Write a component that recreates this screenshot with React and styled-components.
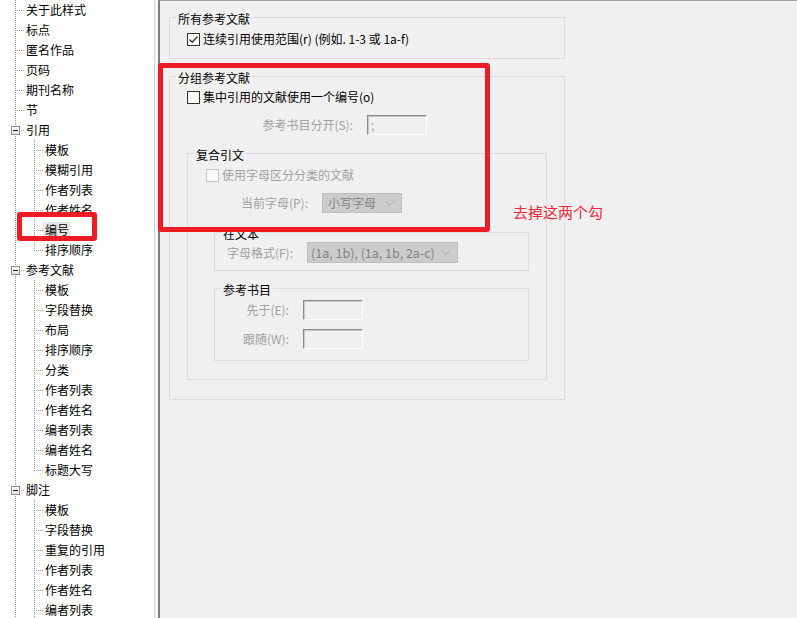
import React from "react";
import styled, { createGlobalStyle } from "styled-components";

const GlobalStyle = createGlobalStyle`
  html, body {
    margin: 0;
    padding: 0;
    background: #f0f0f0;
  }
  body {
    font-family: "Noto Sans CJK SC", "Noto Sans", sans-serif;
    font-size: 12px;
    color: #000;
  }
`;

const RED = "#ed1c24";
const DISABLED = "#a0a0a0";

const Window = styled.div`
  position: relative;
  display: flex;
  width: 797px;
  height: 618px;
  overflow: hidden;
  background: #f0f0f0;
`;

// ---- tree ----

const TreePane = styled.ul`
  flex: none;
  width: 155px;
  box-sizing: border-box;
  margin: 0;
  padding: 0 0 0 5px;
  list-style: none;
  background: #fff;
  border-right: 1px solid #d0d0d0;
  overflow: hidden;
`;

const Splitter = styled.div`
  flex: none;
  width: 3px;
  background: #f7f7f7;
`;

const TreeRow = styled.li`
  display: flex;
  align-items: center;
  height: 20px;
  white-space: nowrap;
`;

const dotV = "repeating-linear-gradient(to bottom, #a0a0a0 0 1px, transparent 1px 2px)";
const dotH = "repeating-linear-gradient(to right, #a0a0a0 0 1px, transparent 1px 2px)";

const guideBg = ({ $line, $branch }) => {
  const img = [];
  const size = [];
  const pos = [];
  if ($line !== "none") {
    img.push(dotV);
    size.push($line === "half" ? "1px 10px" : "1px 100%");
    pos.push("10px 0");
  }
  if ($branch) {
    img.push(dotH);
    size.push("9px 1px");
    pos.push("10px 10px");
  }
  if (!img.length) return "background: none;";
  return `
    background-image: ${img.join(", ")};
    background-size: ${size.join(", ")};
    background-position: ${pos.join(", ")};
    background-repeat: no-repeat;
  `;
};

const Guide = styled.span`
  flex: none;
  display: flex;
  align-items: center;
  width: 19px;
  height: 20px;
  ${guideBg}
`;

const Expander = styled.span`
  display: flex;
  align-items: center;
  justify-content: center;
  width: 9px;
  height: 9px;
  box-sizing: border-box;
  margin-left: 6px;
  border: 1px solid #8e8f8f;
  background: linear-gradient(#ffffff, #e2e2e2);
  &::before {
    content: "";
    width: 5px;
    height: 1px;
    background: #1e1e1e;
  }
`;

const NodeLabel = styled.span`
  padding: 0 2px;
  height: 16px;
  line-height: 16px;
  background: ${p => (p.$selected ? "#e8e8e8" : "transparent")};
`;

const tree = [
  { label: "关于此样式" },
  { label: "标点" },
  { label: "匿名作品" },
  { label: "页码" },
  { label: "期刊名称" },
  { label: "节" },
  {
    label: "引用",
    children: ["模板", "模糊引用", "作者列表", "作者姓名", "编号", "排序顺序"],
  },
  {
    label: "参考文献",
    children: [
      "模板", "字段替换", "布局", "排序顺序", "分类",
      "作者列表", "作者姓名", "编者列表", "编者姓名", "标题大写",
    ],
  },
  {
    label: "脚注",
    children: [
      "模板", "字段替换", "重复的引用", "作者列表",
      "作者姓名", "编者列表", "编者姓名", "标题大写",
    ],
    more: true,
  },
];

function StyleTree() {
  const rows = [];
  tree.forEach(node => {
    rows.push(
      <TreeRow key={node.label + rows.length}>
        <Guide $line="full" $branch>
          {node.children && <Expander />}
        </Guide>
        <NodeLabel>{node.label}</NodeLabel>
      </TreeRow>
    );
    (node.children || []).forEach((child, i) => {
      const last = i === node.children.length - 1 && !node.more;
      rows.push(
        <TreeRow key={node.label + child + rows.length}>
          <Guide $line="full" />
          <Guide $line={last ? "half" : "full"} $branch />
          <NodeLabel $selected={node.label === "引用" && child === "编号"}>
            {child}
          </NodeLabel>
        </TreeRow>
      );
    });
  });
  return <TreePane>{rows}</TreePane>;
}

// ---- settings panel ----

const Panel = styled.div`
  flex: 1;
  border-left: 2px solid #7c7c7c;
  border-top: 1px solid #a0a0a0;
  padding: 7px 0 0 9px;
`;

const Group = styled.fieldset`
  width: ${p => p.$width}px;
  box-sizing: border-box;
  min-width: 0;
  margin: ${p => p.$mt || 0}px 0 0 ${p => p.$ml || 0}px;
  padding: 0 0 ${p => p.$pb || 0}px;
  border: 1px solid #dcdcdc;
`;

const Legend = styled.legend`
  margin-left: 6px;
  padding: 3px 2px 0;
  line-height: 16px;
  font-size: 12px;
  color: #000;
`;

const CheckRow = styled.label`
  display: flex;
  align-items: center;
  gap: 3px;
  height: 16px;
  margin-top: ${p => p.$mt || 0}px;
  padding-left: ${p => p.$indent || 0}px;
  line-height: 16px;
  color: ${p => (p.$disabled ? DISABLED : "#000")};
  white-space: nowrap;
`;

const Box = styled.span`
  flex: none;
  display: flex;
  align-items: center;
  justify-content: center;
  width: 13px;
  height: 13px;
  box-sizing: border-box;
  border: 1px solid ${p => (p.$disabled ? "#c4c4c4" : "#333333")};
  background: ${p => (p.$disabled ? "#fafafa" : "#fff")};
`;

function Checkbox({ checked, disabled, children, ...rest }) {
  return (
    <CheckRow $disabled={disabled} {...rest}>
      <Box $disabled={disabled}>
        {checked && (
          <svg width="11" height="11" viewBox="0 0 11 11">
            <path d="M1.5 5.5 L4.2 8.2 L9.5 2.5" fill="none" stroke="#333" strokeWidth="1.3" />
          </svg>
        )}
      </Box>
      {children}
    </CheckRow>
  );
}

const FieldRow = styled.div`
  display: flex;
  align-items: center;
  height: ${p => p.$h || 20}px;
  margin-top: ${p => p.$mt || 0}px;
  white-space: nowrap;
`;

const FieldLabel = styled.span`
  flex: none;
  width: ${p => p.$w}px;
  margin-right: ${p => p.$gap || 14}px;
  text-align: right;
  line-height: 16px;
  color: ${DISABLED};
`;

const TextBox = styled.div`
  width: 60px;
  height: ${p => p.$h || 20}px;
  box-sizing: border-box;
  padding-left: 3px;
  border-style: solid;
  border-width: 1px;
  border-color: #8a8a8a #ffffff #ffffff #8a8a8a;
  box-shadow: inset 1px 1px 0 #c8c8c8;
  background: #f0f0f0;
  color: ${DISABLED};
  line-height: 17px;
`;

const Select = styled.div`
  display: flex;
  align-items: center;
  justify-content: space-between;
  width: ${p => p.$w}px;
  height: ${p => p.$h || 20}px;
  box-sizing: border-box;
  padding: 0 7px 0 ${p => p.$pl || 4}px;
  border: 1px solid #bfbfbf;
  background: #cccccc;
  color: #838383;
  line-height: 16px;
  font-size: ${p => (p.$latin ? "12.5px" : "12px")};
`;

function Chevron() {
  return (
    <svg width="9" height="5" viewBox="0 0 9 5">
      <path d="M0.5 0.5 L4.5 4.5 L8.5 0.5" fill="none" stroke="#a8a8a8" strokeWidth="1" />
    </svg>
  );
}

// ---- annotations drawn over the screenshot ----

const Mark = styled.div`
  position: absolute;
  left: ${p => p.$x}px;
  top: ${p => p.$y}px;
  width: ${p => p.$w}px;
  height: ${p => p.$h}px;
  box-sizing: border-box;
  border: 5px solid ${RED};
  border-radius: 3px;
  pointer-events: none;
`;

const Note = styled.div`
  position: absolute;
  left: 513px;
  top: 202px;
  font-size: 15px;
  line-height: 20px;
  color: #ee2a3a;
  white-space: nowrap;
`;

export default function App() {
  return (
    <>
      <GlobalStyle />
      <Window>
        <StyleTree />
        <Splitter />
        <Panel>
          <Group $width={396} $pb={11}>
            <Legend>所有参考文献</Legend>
            <Checkbox checked $mt={4} $indent={17}>
              连续引用使用范围(r) (例如. 1-3 或 1a-f)
            </Checkbox>
          </Group>

          <Group $width={396} $mt={8} $pb={19}>
            <Legend>分组参考文献</Legend>
            <Checkbox $mt={3} $indent={17}>
              集中引用的文献使用一个编号(o)
            </Checkbox>
            <FieldRow $mt={10}>
              <FieldLabel $w={183}>参考书目分开(S):</FieldLabel>
              <TextBox>;</TextBox>
            </FieldRow>

            <Group $width={360} $ml={17} $mt={9} $pb={18}>
              <Legend>复合引文</Legend>
              <Checkbox disabled $mt={4} $indent={18}>
                使用字母区分分类的文献
              </Checkbox>
              <FieldRow $mt={10}>
                <FieldLabel $w={120}>当前字母(P):</FieldLabel>
                <Select $w={80} $pl={5}>
                  小写字母
                  <Chevron />
                </Select>
              </FieldRow>

              <Group $width={315} $ml={26} $mt={10} $pb={7}>
                <Legend>在文本</Legend>
                <FieldRow $h={21}>
                  <FieldLabel $w={78}>字母格式(F):</FieldLabel>
                  <Select $w={151} $h={21} $pl={3} $latin>
                    (1a, 1b), (1a, 1b, 2a-c)
                    <Chevron />
                  </Select>
                </FieldRow>
              </Group>

              <Group $width={315} $ml={26} $mt={8} $pb={11}>
                <Legend>参考书目</Legend>
                <FieldRow $mt={2}>
                  <FieldLabel $w={74}>先于(E):</FieldLabel>
                  <TextBox />
                </FieldRow>
                <FieldRow $mt={9}>
                  <FieldLabel $w={74}>跟随(W):</FieldLabel>
                  <TextBox />
                </FieldRow>
              </Group>
            </Group>
          </Group>
        </Panel>

        <Mark $x={17} $y={212} $w={80} $h={29} />
        <Mark $x={158} $y={63} $w={332} $h={169} />
        <Note>去掉这两个勾</Note>
      </Window>
    </>
  );
}
